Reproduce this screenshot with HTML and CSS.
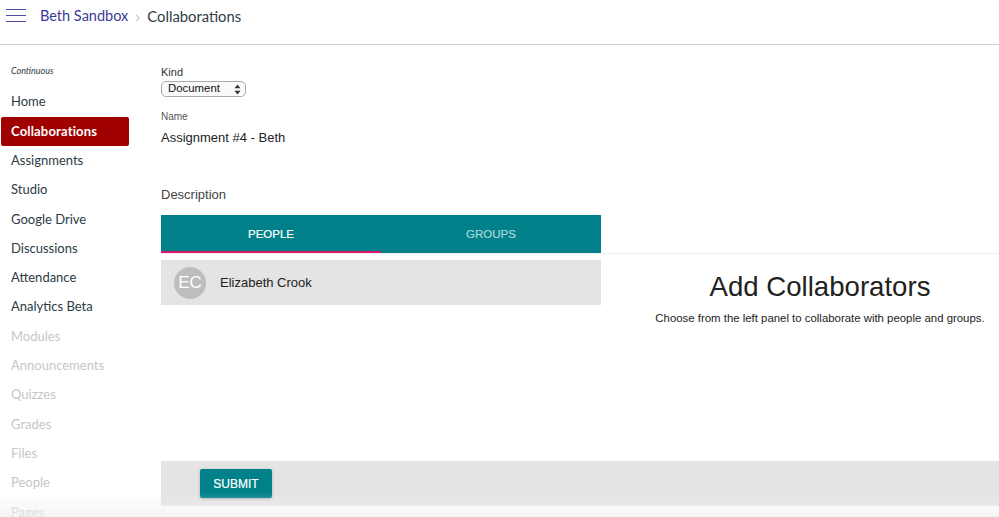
FILE: index.html
```html
<!DOCTYPE html>
<html lang="en">
<head>
<meta charset="utf-8">
<title>Collaborations</title>
<link rel="stylesheet" href="styles.css">
</head>
<body>
<div class="page">
  <header class="topbar">
    <svg class="hamburger" width="20" height="13" viewBox="0 0 20 13" aria-hidden="true">
      <path d="M0 .5H20M0 6.5H20M0 12.5H20" stroke="#4a4aa8" stroke-width="1" fill="none"/>
    </svg>
    <a class="crumb-link">Beth Sandbox</a>
    <svg class="crumb-sep" width="5" height="8" viewBox="0 0 5 8" aria-hidden="true">
      <path d="M1 0.5L4 4L1 7.5" stroke="#a5adb3" stroke-width="1" fill="none"/>
    </svg>
    <span class="crumb-current">Collaborations</span>
  </header>
  <div class="body-row">
    <nav class="sidebar">
      <div class="term">Continuous</div>
      <a class="nav-item">Home</a>
      <a class="nav-item active">Collaborations</a>
      <a class="nav-item">Assignments</a>
      <a class="nav-item">Studio</a>
      <a class="nav-item">Google Drive</a>
      <a class="nav-item">Discussions</a>
      <a class="nav-item">Attendance</a>
      <a class="nav-item">Analytics Beta</a>
      <a class="nav-item muted">Modules</a>
      <a class="nav-item muted">Announcements</a>
      <a class="nav-item muted">Quizzes</a>
      <a class="nav-item muted">Grades</a>
      <a class="nav-item muted">Files</a>
      <a class="nav-item muted">People</a>
      <a class="nav-item muted">Pages</a>
    </nav>
    <main class="content">
      <div class="kind-label">Kind</div>
      <div class="select"><span>Document</span>
        <svg width="7" height="11" viewBox="0 0 7 11" aria-hidden="true"><path d="M3.5 0.5L6.5 4.2H0.5ZM3.5 10.5L0.5 6.8H6.5Z" fill="#333"/></svg>
      </div>
      <div class="name-label">Name</div>
      <div class="name-value">Assignment #4 - Beth</div>
      <div class="desc-label">Description</div>
      <div class="tabs-line">
        <div class="tabs">
          <div class="tab selected">PEOPLE</div>
          <div class="tab">GROUPS</div>
        </div>
      </div>
      <div class="panels">
        <div class="left-panel">
          <div class="person">
            <div class="avatar">EC</div>
            <div class="person-name">Elizabeth Crook</div>
          </div>
        </div>
        <div class="right-panel">
          <h1 class="add-title">Add Collaborators</h1>
          <p class="add-help">Choose from the left panel to collaborate with people and groups.</p>
        </div>
      </div>
      <div class="submit-bar"><button class="submit">SUBMIT</button></div>
    </main>
  </div>
  <div class="fade"></div>
</div>
</body>
</html>
```
FILE: styles.css
```css
* { box-sizing: border-box; }
html, body { margin: 0; padding: 0; background: #fff; }
.page {
  position: relative;
  width: 999px;
  height: 517px;
  overflow: hidden;
  font-family: "Liberation Sans", Arial, sans-serif;
  color: #222;
}
.topbar {
  height: 45px;
  border-bottom: 1px solid #c7cdd1;
  display: flex;
  align-items: flex-start;
  padding: 9px 0 0 6px;
  font-family: Lato, sans-serif;
  font-size: 14.5px;
  line-height: 14px;
}
.hamburger { flex: none; margin-right: 14px; }
.crumb-link { color: #3b3b98; }
.crumb-sep { flex: none; margin: 5px 7px 0 7px; }
.crumb-current { color: #2d3b45; font-size: 14.8px; }
.body-row { display: flex; height: 472px; }
.sidebar {
  width: 161px;
  flex: none;
  padding: 20px 32px 0 1px;
  font-family: Lato, sans-serif;
}
.term {
  font-size: 9px;
  font-style: italic;
  line-height: 11px;
  color: #2d3b45;
  padding-left: 10px;
  margin-bottom: 11.4px;
}
.nav-item {
  display: block;
  height: 29.3px;
  line-height: 29.3px;
  padding-left: 10px;
  font-size: 13px;
  color: #2d3b45;
  border-radius: 2px;
}
.nav-item.active {
  background: #a00000;
  color: #fff;
  font-weight: 700;
  letter-spacing: .17px;
}
.nav-item.muted { color: #c3c7ca; }
.content { flex: 1; min-width: 0; display: flex; flex-direction: column; }
.kind-label { margin-top: 20px; font-size: 11px; line-height: 14px; color: #333; }
.select {
  width: 85px;
  height: 16px;
  margin-top: 2px;
  border: 1px solid #a9a9a9;
  border-radius: 5px;
  background: #fafafa;
  display: flex;
  align-items: center;
  justify-content: space-between;
  padding: 0 4px 2px 6px;
  font-size: 11.4px;
  color: #111;
}
.select svg { position: relative; top: 1px; }
.name-label { margin-top: 14px; font-size: 10px; line-height: 12px; color: #555; }
.name-value { margin-top: 7px; font-size: 13px; line-height: 16px; color: #222; }
.desc-label { margin-top: 41px; font-size: 13px; line-height: 16px; color: #444; }
.tabs-line { margin-top: 12px; border-bottom: 1px solid #eee; height: 39px; }
.tabs { width: 440px; height: 38px; background: #00818a; display: flex; }
.tab {
  width: 50%;
  height: 38px;
  text-align: center;
  font-size: 11.5px;
  line-height: 38px;
  color: #a9d6d9;
  -webkit-text-stroke: .2px;
}
.tab.selected { color: #fff; border-bottom: 2px solid #e0186c; }
.panels { display: flex; height: 201px; margin-top: 6px; }
.left-panel { width: 440px; flex: none; }
.person {
  height: 45px;
  background: #e4e4e4;
  display: flex;
  align-items: center;
  padding-left: 13px;
}
.avatar {
  width: 32px;
  height: 32px;
  border-radius: 50%;
  background: #bdbdbd;
  color: #fff;
  font-size: 17px;
  line-height: 32px;
  text-align: center;
}
.person-name { margin-left: 14px; font-size: 13px; color: #222; }
.right-panel { flex: 1; min-width: 0; text-align: center; padding: 11px 0 0 40px; }
.add-title { margin: 0; font-size: 27.6px; font-weight: 400; line-height: 32px; color: #222; }
.add-help { margin: 8px 0 0; font-size: 11.4px; line-height: 14px; color: #222; }
.submit-bar {
  height: 45px;
  background: #e4e4e4;
  display: flex;
  align-items: center;
  padding-left: 39px;
}
.submit {
  width: 72px;
  height: 29px;
  border: 0;
  border-radius: 2px;
  background: #00818a;
  color: #fff;
  font-family: "Liberation Sans", Arial, sans-serif;
  font-size: 12px;
  font-weight: 400;
  -webkit-text-stroke: .2px;
  box-shadow: 0 1px 3px rgba(0,0,0,.25);
  padding: 0;
}
.fade {
  position: absolute;
  left: 0;
  right: 0;
  bottom: 0;
  height: 24px;
  background: linear-gradient(rgba(240,240,240,0), rgba(240,240,240,.7));
  pointer-events: none;
}
```
